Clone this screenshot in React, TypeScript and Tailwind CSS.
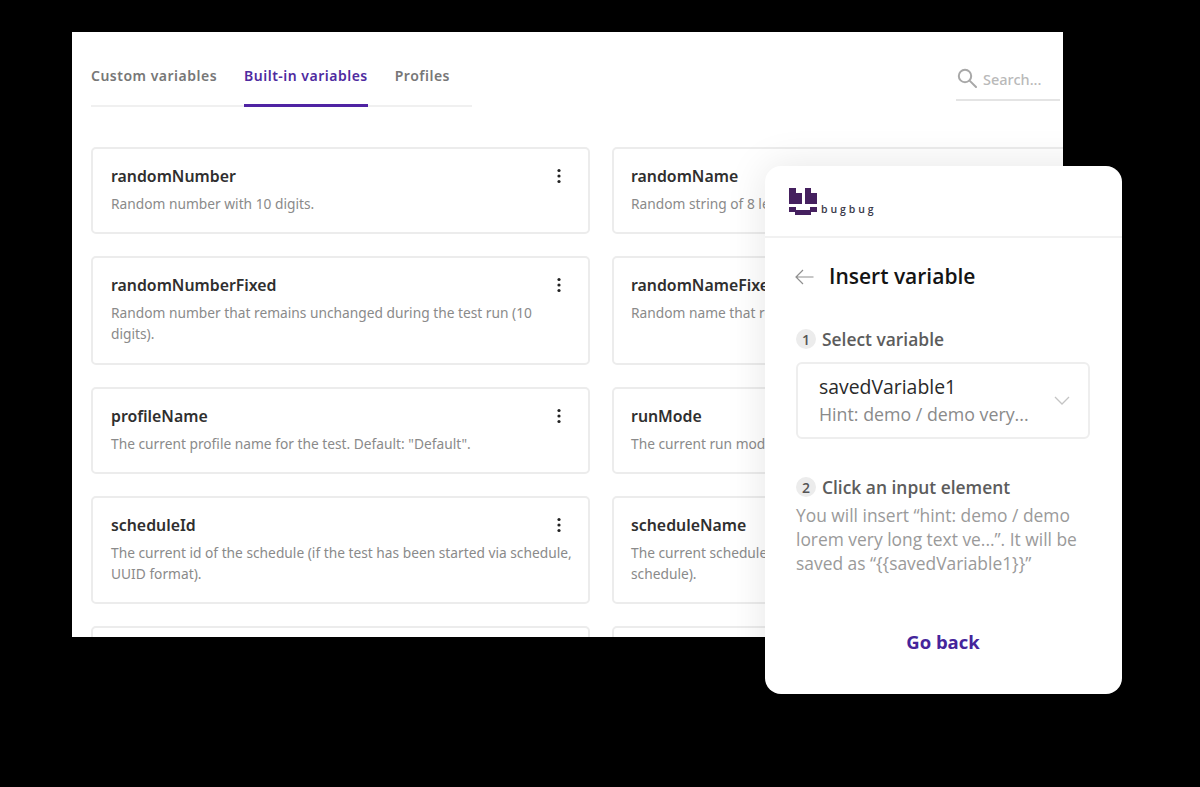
const CARDS = [
  {
    left: { name: "randomNumber", text: "Random number with 10 digits." },
    right: { name: "randomName", text: "Random string of 8 letters." },
    h: "h-[87px]",
  },
  {
    left: {
      name: "randomNumberFixed",
      text: "Random number that remains unchanged during the test run (10 digits).",
    },
    right: { name: "randomNameFixed", text: "Random name that remains unchanged during the test." },
    h: "h-[109px]",
  },
  {
    left: { name: "profileName", text: 'The current profile name for the test. Default: "Default".' },
    right: { name: "runMode", text: "The current run mode of the test." },
    h: "h-[87px]",
  },
  {
    left: {
      name: "scheduleId",
      text: "The current id of the schedule (if the test has been started via schedule, UUID format).",
    },
    right: { name: "scheduleName", text: "The current schedule name (if the test has been started via schedule)." },
    h: "h-[108px]",
  },
];

function Dots() {
  return (
    <svg width="6" height="16" viewBox="0 0 6 16" className="absolute right-[26px] top-[19px]" aria-hidden="true">
      <circle cx="3" cy="2.5" r="1.6" fill="#222" />
      <circle cx="3" cy="8" r="1.6" fill="#222" />
      <circle cx="3" cy="13.5" r="1.6" fill="#222" />
    </svg>
  );
}

function Card({ name, text, h, dots }: { name: string; text: string; h: string; dots?: boolean }) {
  return (
    <div className={`relative ${h} rounded-[5px] border-2 border-[#ececec] bg-white pt-[16px] ${dots ? "pl-[18px] pr-[14px]" : "pl-[17px] pr-[60px]"}`}>
      <div className="text-[15.85px] font-semibold leading-[23px] text-[#2f2f2f]">{name}</div>
      <div className="mt-[5px] text-[13.75px] leading-[21px] text-[#8a8a8a]">{text}</div>
      {dots && <Dots />}
    </div>
  );
}

function Step({ n, label }: { n: number; label: string }) {
  return (
    <div className="flex items-center gap-[6px]">
      <span className="flex h-[20px] w-[20px] items-center justify-center rounded-full bg-[#ececec] text-[14px] font-semibold text-[#555]">
        {n}
      </span>
      <span className="text-[17.4px] font-semibold leading-[24px] text-[#5c5c5c]">{label}</span>
    </div>
  );
}

function Logo() {
  return (
    <div className="flex items-end">
      <svg width="28" height="27" viewBox="0 0 28 27" aria-hidden="true">
        <path d="M0 0H7V5H13V16H0ZM16 0H22V5H28V16H16Z" fill="#45205f" />
        <path d="M0 19H7V22H21V19H28V24H22V27H6V24H0Z" fill="#45205f" />
      </svg>
      <span className="ml-[4px] text-[10.5px] font-semibold leading-[12px] tracking-[2.9px] text-[#3a3a4a]">bugbug</span>
    </div>
  );
}

export default function App() {
  return (
    <div className="relative h-[787px] w-[1200px] overflow-hidden bg-black font-['Noto_Sans',sans-serif]">
      <div className="ml-[72px] mt-[32px] inline-block h-[605px] w-[991px] overflow-hidden bg-white pl-[19px]">
        <div className="flex items-start justify-between">
          <div className="mt-[32px] flex h-[43px] w-[381px] gap-[27px] border-b-2 border-[#f0f0f0] text-[14px] font-semibold tracking-[0.5px] text-[#777]">
            <span className="pt-[1px]">Custom variables</span>
            <span className="h-[43px] border-b-[3px] border-[#4f23a3] pt-[1px] text-[#4f2ba0]">Built-in variables</span>
            <span className="pt-[1px]">Profiles</span>
          </div>
          <div className="mr-[3px] mt-[36px] flex h-[33px] w-[104px] items-start gap-[6px] border-b-2 border-[#e4e4e4] pl-[1px]">
            <svg width="20" height="20" viewBox="0 0 20 20" fill="none" stroke="#a8a8a8" strokeWidth="2" aria-hidden="true">
              <circle cx="8" cy="8" r="6.2" />
              <path d="M12.6 12.6 19 19" strokeLinecap="round" />
            </svg>
            <span className="text-[14.5px] font-medium leading-[22px] text-[#b9b9b9]">Search...</span>
          </div>
        </div>

        <div className="mt-[40px] flex flex-col gap-[22px]">
          {CARDS.map((row) => (
            <div key={row.left.name} className="grid grid-cols-[499px_500px] gap-[22px]">
              <Card name={row.left.name} text={row.left.text} h={row.h} dots />
              <Card name={row.right.name} text={row.right.text} h={row.h} />
            </div>
          ))}
          <div className="grid grid-cols-[499px_500px] gap-[22px]">
            <div className="h-[60px] rounded-[5px] border-2 border-[#ececec]" />
            <div className="h-[60px] rounded-[5px] border-2 border-[#ececec]" />
          </div>
        </div>
      </div>

      <div className="absolute left-[765px] top-[166px] h-[528px] w-[357px] rounded-[16px] bg-white font-['Open_Sans','Noto_Sans',sans-serif] shadow-[0_0_40px_rgba(0,0,0,0.1)]">
        <div className="flex h-[72px] items-start border-b-2 border-[#f1f1f1] pl-[24px] pt-[22px]">
          <Logo />
        </div>
        <div className="flex items-center pl-[30px] pt-[22px]">
          <svg width="19" height="16" viewBox="0 0 19 16" fill="none" stroke="#8f8f8f" strokeWidth="1.2" className="mt-[2px]" aria-hidden="true">
            <path d="M18.5 8H1M8 1 1 8l7 7" />
          </svg>
          <span className="ml-[15px] text-[21px] font-semibold leading-[32px] text-[#141414]">Insert variable</span>
        </div>
        <div className="pl-[31px] pr-[32px] pt-[35px]">
          <Step n={1} label="Select variable" />
          <div className="mt-[11px] flex h-[77px] items-center justify-between rounded-[6px] border-2 border-[#eeeeee] pl-[21px] pr-[18px]">
            <div>
              <div className="text-[19.4px] leading-[24px] text-[#2a2a2a]">savedVariable1</div>
              <div className="mt-[3px] text-[17.8px] leading-[24px] text-[#8a8a8a]">Hint: demo / demo very...</div>
            </div>
            <svg width="16" height="9" viewBox="0 0 16 9" fill="none" stroke="#c4c4c4" strokeWidth="1.3" aria-hidden="true">
              <path d="M1 1l7 7 7-7" />
            </svg>
          </div>
          <div className="mt-[36px]">
            <Step n={2} label="Click an input element" />
          </div>
          <p className="mt-[4px] text-[17.4px] leading-[24px] text-[#9a9a9a]">
            You will insert “hint: demo / demo lorem very long text ve...”. It will be saved as “{"{{savedVariable1}}"}”
          </p>
          <div className="mt-[55px] text-center text-[18.5px] font-bold leading-[24px] text-[#45259b]">Go back</div>
        </div>
      </div>
    </div>
  );
}
